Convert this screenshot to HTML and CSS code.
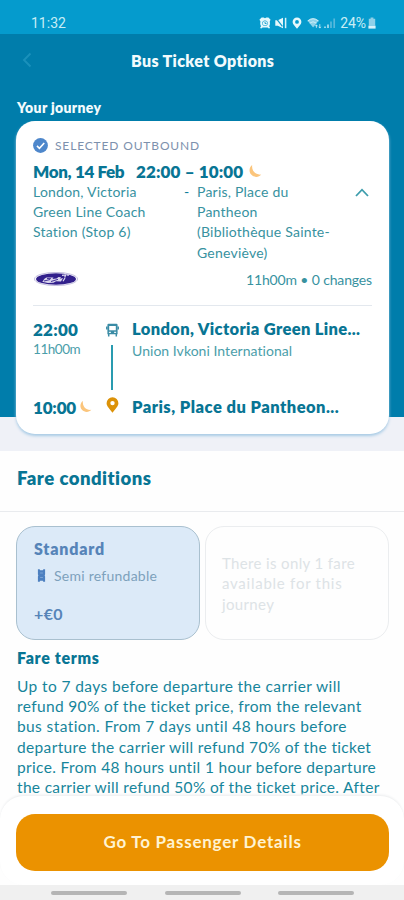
FILE: index.html
```html
<!DOCTYPE html>
<html lang="en">
<head>
<meta charset="utf-8">
<title>Bus Ticket Options</title>
<link rel="stylesheet" href="styles.css">
</head>
<body>
<svg class="defs" aria-hidden="true">
  <symbol id="moon" viewBox="0 0 14 14"><path d="M4.2 1C1.2 3 .6 7.600 3.200 10.600 6 13.700 10.800 13.600 13.200 10.600 8 11.300 3.300 7 4.200 1Z" fill="#fbc57c"/></symbol>
</svg>
<div class="status">
  <span class="clock">11:32</span>
  <div class="status-icons">
    <svg class="i-alarm" viewBox="0 0 12 12"><path d="M.4 2.800 2.600.6h2L6 1.200 7.400.6h2l2.200 2.200-.8 1.400.2 2.800-.8 2.200.9 1.800-1.200.4-1.300-.9H3.600l-1.300.9-1.200-.4.9-1.800L1.200 7l.2-2.800Z" fill="#e6f8fc"/><circle cx="6" cy="6.200" r="2.700" fill="#0d9acb"/><circle cx="6" cy="6.200" r="2.200" fill="#e6f8fc"/><path d="M6 4.600v1.900h1.500" stroke="#0d9acb" stroke-width=".9" fill="none"/></svg>
    <svg class="i-mute" viewBox="0 0 12 12"><path d="M.3 3.300h2.500L8 .8v10.400L2.800 8.700H.3Z" fill="#e6f8fc"/><path d="M.8.900 7.400 9.400" stroke="#0d9acb" stroke-width="1.200"/><path d="M10.600.8v10.400" stroke="#d7f2fa" stroke-width="1.500"/></svg>
    <svg class="i-loc" viewBox="0 0 10 12"><path fill-rule="evenodd" d="M5 .5a4.400 4.400 0 0 0-4.400 4.400C.6 7.500 3.200 9 5 11.700 6.800 9 9.400 7.500 9.400 4.900A4.400 4.400 0 0 0 5 .5Zm0 2.500a1.900 1.900 0 1 1 0 3.800A1.900 1.900 0 0 1 5 3Z" fill="#e6f8fc"/></svg>
    <svg class="i-wifi" viewBox="0 0 15 12"><path d="M.4 3.600Q6 -1.400 11.800 3.600L6.100 10.600Z" fill="#8fd3ea"/><path d="M.8 4Q6 -.4 11.400 4M2.800 6.100Q6 3.400 9.300 6.100" stroke="#c9edf7" fill="none"/><path d="M9.400 10.800V8m3.400 3V7.200M8.400 9.200l1-1.400 1 1.400m1.400.6 1 1.300 1-1.300" stroke="#c9edf7" stroke-width=".9" fill="none"/></svg>
    <svg class="i-signal" viewBox="0 0 12 12"><path d="M1 11V9.500M4 11V7.500" stroke="#bfe8f4" stroke-width="1.500"/><path d="M7 11V4.500M10.200 11V1.500" stroke="#57b9dc" stroke-width="1.700"/></svg>
    <span class="battery-text">24%</span>
    <svg class="i-batt" viewBox="0 0 8 12"><path d="M2.600.5h2.800v1.200h1.800v7H.8v-7h1.800Z" fill="#8fd0e8"/><path d="M.4 8.700h7.200v2.900H.4Z" fill="#d9f2fa"/></svg>
  </div>
</div>
<header class="top">
  <div class="nav">
    <svg class="back" viewBox="0 0 10 16"><path d="M8.500 1.500 2 8l6.500 6.500" fill="none" stroke="#1a91bb" stroke-width="1.900"/></svg>
    <h1>Bus Ticket Options</h1>
  </div>
  <h2 class="journey-title">Your journey</h2>
</header>
<main>
  <section class="journey">
    <article class="card">
      <div class="selected">
        <svg viewBox="0 0 14 14"><circle cx="7" cy="7" r="6.900" fill="#4e87cb"/><path d="m3.700 7.400 2.300 2.200 4.500-4.900" fill="none" stroke="#fff" stroke-width="1.500"/></svg>
        <span>SELECTED OUTBOUND</span>
      </div>
      <div class="when">
        <span class="date">Mon, 14 Feb</span><span class="hours">22:00 – 10:00</span><svg class="moon"><use href="#moon"/></svg>
      </div>
      <div class="route">
        <p class="from">London, Victoria<br>Green Line Coach<br>Station (Stop 6)</p>
        <span class="dash">-</span>
        <p class="to">Paris, Place du<br>Pantheon<br>(Bibliothèque Sainte-<br>Geneviève)</p>
        <svg class="chevron" viewBox="0 0 14 9"><path d="m1 8 6-6.300L13 8" fill="none" stroke="#3d9dac" stroke-width="1.800"/></svg>
      </div>
      <div class="summary">
        <svg class="operator" viewBox="0 0 44 14"><ellipse cx="22" cy="7" rx="21.500" ry="6.600" fill="#fff" stroke="#a7a0cf" stroke-width=".7"/><ellipse cx="22" cy="7" rx="20" ry="5.700" fill="#32208c"/><path d="M8 9.800c2-.9 1.500-3.500 4.500-4.300h7l-1 1.400 4-.4 2-1.500 2.500.2-1 1.500 3-.6-2 3.300-5-.2-2.500 1.500-5.500.2Z" fill="#d9d5ed"/><path d="m10 9 6-1.500M17 9.500l7-2.200M13 6.500l4 .2" stroke="#32208c" stroke-width=".9"/><path d="m28 3.400 3.500-.5-.7 2.600m1.700-2.700 2.500.3M31 6l-2 3.300" stroke="#e2dff2" stroke-width="1.200" fill="none"/></svg>
        <span>11h00m • 0 changes</span>
      </div>
      <div class="legs">
        <div class="times">
          <div class="time">22:00</div>
          <div class="duration">11h00m</div>
          <div class="time arrive">10:00<svg class="moon"><use href="#moon"/></svg></div>
        </div>
        <div class="track">
          <svg class="bus" viewBox="0 0 13 14"><path d="M2.500.8h8q1.100 0 1.100 1.200v9.200H1.400V2Q1.400.8 2.500.8Z" fill="#3a8ba5"/><path d="M3.200 3h6.600v4.300H3.200Z" fill="#fff"/><path d="M2.900 9.300h2m3.200 0h2" stroke="#e4f3f5" stroke-width="1.300"/><path d="M.8 3.500v3m11.400-3v3M2.700 11v2.400m7.600-2.400v2.400" stroke="#3a8ba5" stroke-width="1.500"/></svg>
          <span class="line"></span>
          <svg class="pin" viewBox="0 0 12 16"><path fill-rule="evenodd" d="M6 .3A5.900 5.900 0 0 0 .1 6.200C.1 9.500 3.500 11.900 6 15.700c2.500-3.800 5.900-6.200 5.900-9.500A5.900 5.900 0 0 0 6 .3Zm0 3.600a2.200 2.200 0 1 1 0 4.400 2.200 2.200 0 0 1 0-4.400Z" fill="#dc9208"/></svg>
        </div>
        <div class="stops">
          <div class="stop">London, Victoria Green Line...</div>
          <div class="carrier">Union Ivkoni International</div>
          <div class="stop last">Paris, Place du Pantheon...</div>
        </div>
      </div>
    </article>
  </section>
  <h2 class="fare-title">Fare conditions</h2>
  <section class="fares">
    <div class="fare active">
      <h3>Standard</h3>
      <div class="refund"><svg viewBox="0 0 8 13"><path d="M.4.3h1.700l.6 1h2.600l.6-1h1.700v4.900l-.4 1.200.4 1.200v5.100H5.800l-.5-1H2.700l-.5 1H.4V7.600l.4-1.200-.4-1.200Z" fill="#4d80c0"/><path d="M2.600 4h2.800M2.600 8.500h2.800" stroke="#8fb3dd" stroke-width=".7"/></svg><span>Semi refundable</span></div>
      <div class="price">+€0</div>
    </div>
    <div class="fare empty"><p>There is only 1 fare<br><span class="wide">available for this</span><br>journey</p></div>
  </section>
  <section class="terms">
    <h3>Fare terms</h3>
    <p><span class="loose">Up to 7 days before departure the carrier will</span><br><span class="mid">refund 90% of the ticket price, from the relevant</span><br><span class="loose">bus station. From 7 days until 48 hours before</span><br><span class="mid">departure the carrier will refund 70% of the ticket</span><br><span class="mid">price. From 48 hours until 1 hour before departure</span><br>the carrier will refund 50% of the ticket price. After</p>
  </section>
</main>
<footer class="bottom">
  <div class="sheet"><button>Go To Passenger Details</button></div>
  <div class="keys"><i></i><i></i><i></i></div>
</footer>
</body>
</html>
```
FILE: styles.css
```css
* { box-sizing: border-box; }
body {
  margin: 0;
  height: 900px;
  overflow: hidden;
  display: flex;
  flex-direction: column;
  background: #fefefe;
  color: #087c99;
  font-family: Lato, sans-serif;
  white-space: nowrap;
}
h1, h2, h3, p { margin: 0; }
svg { display: block; flex: none; }
.defs { display: none; }

.status {
  flex: none;
  height: 34px;
  padding: 13px 28px 0 31px;
  display: flex;
  justify-content: space-between;
  background: #059bcd;
  color: #c8edf5;
  font: 14px/21px Roboto, sans-serif;
}
.status-icons { display: flex; align-items: center; }
.status-icons svg { margin-bottom: 1px; }
.i-alarm { width: 12px; height: 12px; margin-right: 4px; }
.i-mute { width: 12px; height: 12px; margin-right: 5px; }
.i-loc { width: 10px; height: 12px; margin-right: 5px; }
.i-wifi { width: 15px; height: 12px; margin-right: 2px; }
.i-signal { width: 12px; height: 12px; margin-right: 4px; }
.battery-text { letter-spacing: -.1px; }
.i-batt { width: 8px; height: 12px; margin-left: 2px; }

.top { flex: none; height: 87px; background: #007dab; color: #f2fbfd; }
.nav { height: 52px; display: flex; align-items: center; padding: 0 22px; }
.back { width: 10px; height: 16px; margin-right: 99px; }
h1 { font-size: 16px; font-weight: 800; letter-spacing: .37px; }
.journey-title { padding-left: 17px; font-size: 14px; line-height: 44px; font-weight: 800; letter-spacing: .35px; }

main { flex: 1; min-height: 0; overflow: hidden; }
.journey {
  height: 330px;
  padding: 0 15px 0 16px;
  background: linear-gradient(#007dab 296px, #eff1f7 296px);
}
.card {
  height: 313px;
  padding: 13px 17px 0;
  background: #fff;
  border-radius: 19px;
  box-shadow: 0 2px 3px #a8cbe5;
}
.selected { display: flex; align-items: center; height: 22px; gap: 7px; color: #7d91ad; font-size: 12px; letter-spacing: .85px; }
.selected svg { width: 15px; height: 15px; }
.when { display: flex; align-items: center; height: 26px; padding-top: 4px; font-size: 17px; font-weight: 800; letter-spacing: -.35px; color: #087594; }
.date { width: 103px; }
.hours { letter-spacing: .13px; }
.moon { width: 14px; height: 14px; margin-left: 5px; }
.route { display: grid; grid-template-columns: 151px 12px 159px 14px; height: 86px; font-size: 14px; line-height: 20.2px; letter-spacing: .22px; color: #38929f; }
.dash { color: #087c99; }
.to { padding-left: 1px; }
.chevron { width: 14px; height: 9px; margin-top: 6px; }
.summary { display: flex; align-items: center; justify-content: space-between; height: 22px; color: #38929f; font-size: 14px; letter-spacing: -.15px; }
.operator { width: 44px; height: 14px; margin-left: 1px; }
.legs { display: flex; margin-top: 15px; padding-top: 12px; border-top: 1px solid #e3e8ee; height: 128px; }
.times { width: 72px; }
.time { display: flex; align-items: center; height: 22px; font-size: 17px; font-weight: 800; letter-spacing: .25px; color: #087594; }
.duration { height: 20px; line-height: 18px; font-size: 13.500px; letter-spacing: -.45px; color: #4b9eaa; }
.arrive { margin-top: 36px; letter-spacing: -.2px; }
.arrive .moon { width: 13px; height: 13px; margin: 0 0 2px 3px; }
.track { width: 27px; display: flex; flex-direction: column; }
.bus { width: 13px; height: 14px; margin: 5px 0 0 1px; }
.line { width: 2px; height: 45px; margin: 8px 0 0 6px; background: #299bb0; }
.pin { width: 13px; height: 16px; margin: 7px 0 0 1px; }
.stop { height: 22px; line-height: 22px; font-size: 16.500px; font-weight: 800; letter-spacing: .34px; color: #087594; }
.carrier { height: 20px; line-height: 21px; font-size: 14px; letter-spacing: .04px; color: #4b9eaa; }
.last { margin-top: 36px; letter-spacing: .46px; }

.fare-title { height: 61px; padding: 0 0 0 17px; border-bottom: 1px solid #e9ebee; line-height: 54px; font-size: 18.500px; font-weight: 800; letter-spacing: .48px; color: #087594; }
.fares { display: grid; grid-template-columns: 184px 184px; gap: 5px; padding: 14px 16px 0; }
.fare { height: 114px; border-radius: 19px; padding: 11px 17px; }
.active { background: #dceaf8; border: 1px solid #a9c0cf; color: #5684b8; }
.fare h3 { font-size: 16px; line-height: 22px; font-weight: 800; letter-spacing: .8px; }
.refund { display: flex; align-items: center; gap: 8px; height: 31px; padding-left: 3px; color: #7da1bc; font-size: 14px; letter-spacing: .25px; }
.refund svg { width: 9px; height: 13px; }
.price { margin-top: 12px; line-height: 22px; font-size: 16px; font-weight: 700; letter-spacing: .4px; }
.empty { padding: 26px 16px; border: 1px solid #ebedef; color: #dde3e6; font-size: 15px; line-height: 20.300px; letter-spacing: .36px; }
.wide { letter-spacing: .75px; }
.terms { padding: 6px 17px 0; }
.terms h3 { line-height: 24px; font-size: 16px; font-weight: 800; letter-spacing: .65px; color: #087594; }
.terms p { margin-top: 6px; font-size: 15.500px; line-height: 20.200px; letter-spacing: .32px; color: #16859b; }
.terms .mid { letter-spacing: .35px; }
.terms .loose { letter-spacing: .4px; }

.bottom { flex: none; height: 105px; background: #fefefe; }
.sheet { height: 90px; padding: 18px 15px 0 16px; background: #fff; border-top: 1px solid #f1f2f3; border-radius: 24px; box-shadow: 0 -1px 2px #f4f5f6; }
button { display: block; width: 100%; height: 57px; padding: 0 0 2px; border: 0; border-radius: 19px; background: #eb9200; color: #fff3d2; font: 700 17px Lato, sans-serif; letter-spacing: .75px; }
.keys { height: 15px; padding: 6px 50px 0 51px; display: flex; justify-content: space-between; background: #f0f0f0; }
.keys i { width: 76px; height: 4px; border-radius: 2px; background: #b5b5b5; }
```
